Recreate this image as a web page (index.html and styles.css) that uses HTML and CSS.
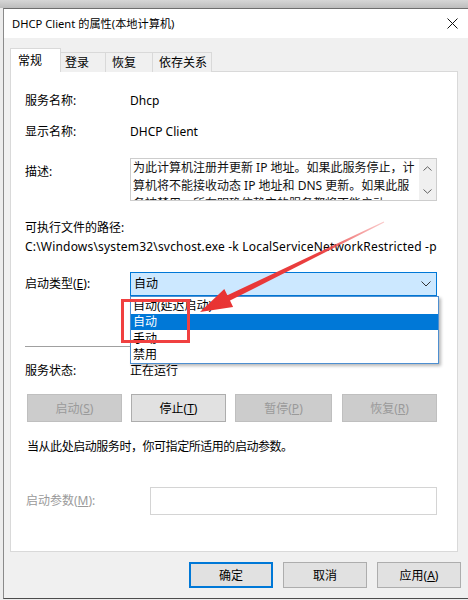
FILE: index.html
```html
<!DOCTYPE html>
<html lang="zh-CN">
<head>
<meta charset="utf-8">
<title>DHCP Client 的属性</title>
<link rel="stylesheet" href="styles.css">
</head>
<body>
<div class="window">
  <div class="titlebar">
    <span class="title">DHCP Client 的属性(本地计算机)</span>
    <svg class="close" width="11" height="11" viewBox="0 0 11 11"><path d="M0.5 0.5 L10.5 10.5 M10.5 0.5 L0.5 10.5" stroke="#111" stroke-width="1" fill="none"/></svg>
  </div>
  <div class="dialog">
    <div class="tabs">
      <div class="tab active t1">常规</div>
      <div class="tab t2">登录</div>
      <div class="tab t3">恢复</div>
      <div class="tab t4">依存关系</div>
    </div>
    <div class="panel">
      <div class="row r1"><span class="label">服务名称:</span><span class="value">Dhcp</span></div>
      <div class="row r2"><span class="label">显示名称:</span><span class="value">DHCP Client</span></div>
      <div class="row r3">
        <span class="label desc-label">描述:</span>
        <div class="descbox">
          <div class="desctext">为此计算机注册并更新 IP 地址。如果此服务停止，计<br>算机将不能接收动态 IP 地址和 DNS 更新。如果此服<br>务被禁用，所有明确依赖它的服务都将不能启动。</div>
          <div class="scroll">
            <svg width="9" height="5" viewBox="0 0 9 5"><path d="M0.5 4.5 L4.5 0.8 L8.5 4.5" stroke="#606060" fill="none"/></svg>
            <svg width="9" height="5" viewBox="0 0 9 5"><path d="M0.5 0.5 L4.5 4.2 L8.5 0.5" stroke="#606060" fill="none"/></svg>
          </div>
        </div>
      </div>
      <div class="row r4">可执行文件的路径:</div>
      <div class="row r5">C:\Windows\system32\svchost.exe -k LocalServiceNetworkRestricted -p</div>
      <div class="row r6">
        <span class="label combo-label">启动类型(<u>E</u>):</span>
        <div class="combo">
          <span class="combo-text">自动</span>
          <svg class="chev" width="10" height="6" viewBox="0 0 10 6"><path d="M0.5 0.5 L5 5 L9.5 0.5" stroke="#333" fill="none"/></svg>
          <ul class="droplist">
            <li class="i1">自动(延迟启动)</li>
            <li class="i2 sel">自动</li>
            <li class="i3">手动</li>
            <li class="i4">禁用</li>
          </ul>
        </div>
      </div>
      <div class="sep"></div>
      <div class="row r7"><span class="label">服务状态:</span><span class="value">正在运行</span></div>
      <div class="btnrow">
        <div class="btn disabled b1">启动(<u>S</u>)</div>
        <div class="btn b2">停止(<u>T</u>)</div>
        <div class="btn disabled b3">暂停(<u>P</u>)</div>
        <div class="btn disabled b4">恢复(<u>R</u>)</div>
      </div>
      <div class="row hint">当从此处启动服务时，你可指定所适用的启动参数。</div>
      <div class="row r8">
        <span class="label param-label">启动参数(<u>M</u>):</span>
        <div class="input"></div>
      </div>
    </div>
    <div class="footer">
      <div class="btn fbtn default">确定</div>
      <div class="btn fbtn">取消</div>
      <div class="btn fbtn">应用(<u>A</u>)</div>
    </div>
  </div>
</div>
<div class="redbox"></div>
<svg class="arrow" width="468" height="600" viewBox="0 0 468 600">
  <defs>
    <linearGradient id="ag" x1="384" y1="222" x2="200" y2="312" gradientUnits="userSpaceOnUse">
      <stop offset="0" stop-color="#f06a6a" stop-opacity="0.35"/>
      <stop offset="0.35" stop-color="#ea4040"/>
      <stop offset="1" stop-color="#e83232"/>
    </linearGradient>
  </defs>
  <polygon points="200,312 224.3,288.9 227.4,295.2 383.8,221.6 384.2,222.4 230,300.6 233.1,306.9" fill="url(#ag)"/>
</svg>
</body>
</html>
```

FILE: styles.css
```css
* { box-sizing: border-box; }
html, body { margin: 0; padding: 0; }
body {
  width: 468px;
  height: 600px;
  overflow: hidden;
  position: relative;
  padding: 8px 0 0 3px;
  background: linear-gradient(to bottom, #d6d6d6 0, #bdbdbd 8px, #ececec 8px);
  font-family: "Noto Sans", "Noto Sans CJK SC", sans-serif;
  font-size: 12px;
  color: #000;
}
.window {
  width: 465px;
  height: 591px;
  border-top: 1px solid #6e6e6e;
  border-left: 1px solid #8a8a8a;
  border-bottom: 1px solid #4c4c4c;
  background: #f0f0f0;
  display: flex;
  flex-direction: column;
}
.titlebar {
  height: 29px;
  flex: none;
  background: #fff;
  display: flex;
  align-items: center;
  padding-left: 8px;
}
.title {
  font-size: 11.2px;
  line-height: 16px;
  color: #000;
}
.close { margin-left: auto; margin-right: 10px; }
.dialog {
  flex: 1;
  padding: 10px 0 0 6px;
  display: flex;
  flex-direction: column;
}
.tabs {
  display: flex;
  align-items: flex-end;
  height: 24px;
  position: relative;
  z-index: 2;
}
.tab {
  height: 20px;
  line-height: 19px;
  border: 1px solid #d9d9d9;
  border-bottom: none;
  background: #f0f0f0;
  margin-left: -1px;
  color: #000;
}
.tab.active {
  height: 24px;
  line-height: 23px;
  background: #fff;
  margin-left: 0;
}
.t1 { width: 51px; padding-left: 7px; }
.t2 { width: 46px; padding-left: 4px; }
.t3 { width: 48px; padding-left: 6px; }
.t4 { width: 60px; padding-left: 6px; }
.panel {
  width: 448px;
  height: 481px;
  margin-top: -1px;
  border: 1px solid #d9d9d9;
  background: #fff;
  padding: 19px 0 0 14px;
  position: relative;
  z-index: 1;
}
.row { display: flex; align-items: flex-start; line-height: 20px; }
.label { width: 105px; flex: none; }
.r2 { margin-top: 11px; }
.r3 { margin-top: 16px; }
.desc-label { padding-top: 4px; }
.descbox {
  width: 307px;
  height: 43px;
  border: 1px solid #cdcdcd;
  display: flex;
  overflow: hidden;
}
.desctext {
  flex: 1;
  padding-left: 2px;
  line-height: 18px;
  color: #111;
  white-space: nowrap;
  overflow: hidden;
}
.scroll {
  width: 17px;
  flex: none;
  background: #f0f0f0;
  display: flex;
  flex-direction: column;
  align-items: center;
  justify-content: space-between;
  padding: 7px 0 6px;
}
.r4 { margin-top: 17px; }
.r5 { line-height: 18px; white-space: nowrap; letter-spacing: 0.19px; }
.r6 { margin-top: 16px; }
.combo-label { line-height: 24px; }
.combo {
  width: 307px;
  height: 24px;
  border: 1px solid #0078d7;
  background: #cce8ff;
  position: relative;
  display: flex;
  align-items: center;
  padding-left: 3px;
}
.combo-text { line-height: 20px; }
.chev { margin-left: auto; margin-right: 5px; }
.droplist {
  position: absolute;
  left: -1px;
  top: 23px;
  width: 309px;
  margin: 0;
  padding: 0;
  list-style: none;
  background: #fff;
  border: 1px solid #4d8fd1;
  box-shadow: 2px 2px 3px rgba(0, 0, 0, 0.28);
  z-index: 5;
}
.droplist li {
  height: 17px;
  line-height: 17px;
  padding-left: 2px;
}
.droplist li.i2, .droplist li.i4 { height: 16px; line-height: 16px; }
.droplist li.sel { background: #0078d7; color: #fff; }
.sep {
  margin-top: 50px;
  width: 412px;
  height: 1px;
  background: #a0a0a0;
}
.r7 { margin-top: 17px; line-height: 14px; }
.btnrow {
  margin-top: 16px;
  display: flex;
  gap: 9px;
  padding-left: 2px;
}
.btn {
  height: 28px;
  display: flex;
  align-items: center;
  justify-content: center;
  border: 1px solid #adadad;
  background: #e1e1e1;
  color: #000;
}
.btn.disabled { background: #cccccc; border-color: #bfbfbf; color: #9a9a9a; }
.b1, .b2, .b4 { width: 95px; }
.b3 { width: 97px; }
.b4 { margin-left: 1px; }
.hint { margin-top: 15px; padding-left: 2px; letter-spacing: -0.45px; }
.r8 { margin-top: 30px; }
.param-label { width: 125px; line-height: 28px; color: #9a9a9a; padding-left: 1px; }
.input {
  width: 287px;
  height: 28px;
  border: 1px solid #d4d4d4;
  background: #fff;
}
.footer {
  display: flex;
  justify-content: flex-end;
  gap: 10px;
  margin-top: 10px;
  padding-right: 7px;
}
.fbtn { width: 84px; height: 26px; }
.fbtn.default { border: 2px solid #0078d7; }
.redbox {
  position: absolute;
  left: 121px;
  top: 299px;
  width: 69px;
  height: 44px;
  border: 3px solid #f04040;
  z-index: 10;
}
.arrow {
  position: absolute;
  left: 0;
  top: 0;
  z-index: 11;
  pointer-events: none;
}
```
